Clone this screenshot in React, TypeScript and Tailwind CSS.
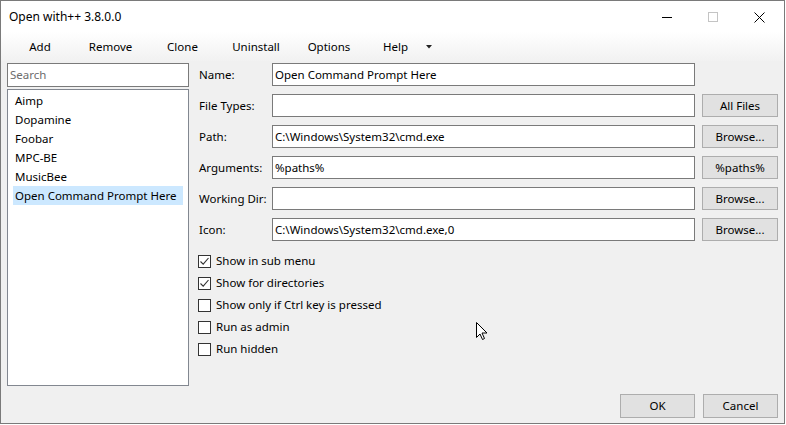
import React from 'react';

const font = { fontFamily: '"Noto Sans", "Segoe UI", sans-serif' };

const items = ['Aimp', 'Dopamine', 'Foobar', 'MPC-BE', 'MusicBee', 'Open Command Prompt Here'];

const fields = [
  { label: 'Name:', value: 'Open Command Prompt Here' },
  { label: 'File Types:', value: '', button: 'All Files' },
  { label: 'Path:', value: 'C:\\Windows\\System32\\cmd.exe', button: 'Browse...' },
  { label: 'Arguments:', value: '%paths%', button: '%paths%' },
  { label: 'Working Dir:', value: '', button: 'Browse...' },
  { label: 'Icon:', value: 'C:\\Windows\\System32\\cmd.exe,0', button: 'Browse...' },
];

const checks = [
  { label: 'Show in sub menu', checked: true },
  { label: 'Show for directories', checked: true },
  { label: 'Show only if Ctrl key is pressed', checked: false },
  { label: 'Run as admin', checked: false },
  { label: 'Run hidden', checked: false },
];

const toolbar = [
  { label: 'Add', w: 'w-[64px]' },
  { label: 'Remove', w: 'w-[77px]' },
  { label: 'Clone', w: 'w-[67px]' },
  { label: 'Uninstall', w: 'w-[80px]' },
  { label: 'Options', w: 'w-[66px]' },
];

const WinButton: React.FC<{ children: React.ReactNode; className?: string }> = ({ children, className }) => (
  <div
    className={`flex items-center justify-center bg-[#e1e1e1] border border-[#adadad] text-[11.5px] text-black ${className ?? ''}`}
  >
    {children}
  </div>
);

export default function App() {
  return (
    <div className="w-[786px] h-[425px] bg-white" style={font}>
      <div className="relative w-[785px] h-[424px] border border-[#7a7a7a] bg-[#f0f0f0] flex flex-col overflow-hidden">
        {/* title bar */}
        <div className="h-[31px] bg-white flex items-center pl-[8px] pt-[1px] text-[12px] text-black shrink-0">
          <span>Open with++ 3.8.0.0</span>
          <div className="ml-auto flex items-center h-full">
            <div className="w-[46px] h-full flex items-center justify-center">
              <div className="w-[10px] h-px bg-black" />
            </div>
            <div className="w-[46px] h-full flex items-center justify-center">
              <div className="w-[10px] h-[10px] border border-[#c4c4c4]" />
            </div>
            <div className="w-[46px] h-full flex items-center justify-center">
              <svg width="11" height="11" viewBox="0 0 11 11">
                <path d="M0.5 0.5 L10.5 10.5 M10.5 0.5 L0.5 10.5" stroke="#000" strokeWidth="1" />
              </svg>
            </div>
            <div className="w-[2px]" />
          </div>
        </div>

        {/* toolbar */}
        <div className="h-[29px] shrink-0 flex items-center pl-[7px] text-[11.5px] text-black bg-gradient-to-b from-white to-[#f1f1f1]">
          {toolbar.map((t) => (
            <div key={t.label} className={`${t.w} text-center`}>
              {t.label}
            </div>
          ))}
          <div className="flex items-center pl-[21px]">
            <span>Help</span>
            <svg className="ml-[18px]" width="6" height="4" viewBox="0 0 6 4">
              <path d="M0 0 H6 L3 3.5 Z" fill="#222" />
            </svg>
          </div>
        </div>

        {/* body */}
        <div className="flex pt-[2px] pl-[6px] text-[11.5px] text-black">
          <div className="w-[182px] flex flex-col shrink-0">
            <div className="h-[24px] bg-white border border-[#7a7a7a] flex items-center pl-[2px] text-[#6d6d6d]">
              Search
            </div>
            <div className="mt-[2px] h-[297px] bg-white border border-[#828790] pt-[1px] px-[5px]">
              {items.map((it, i) => (
                <div
                  key={it}
                  className={`h-[19px] flex items-center pl-[2px] whitespace-nowrap ${
                    i === items.length - 1 ? 'bg-[#cce8ff]' : ''
                  }`}
                >
                  {it}
                </div>
              ))}
            </div>
          </div>

          <div className="ml-[9px] flex flex-col">
            <div className="flex flex-col gap-[8px]">
              {fields.map((f) => (
                <div key={f.label} className="flex items-center h-[23px]">
                  <div className="w-[74px] pl-[1px]">{f.label}</div>
                  <div className="w-[423px] h-[23px] bg-white border border-[#7a7a7a] flex items-center pl-[2px] whitespace-nowrap">
                    {f.value}
                  </div>
                  {f.button && <WinButton className="ml-[7px] w-[76px] h-[23px]">{f.button}</WinButton>}
                </div>
              ))}
            </div>

            <div className="mt-[9px] flex flex-col">
              {checks.map((c) => (
                <div key={c.label} className="h-[22px] flex items-center">
                  <div className="w-[13px] h-[13px] border border-[#333333] bg-white flex items-center justify-center">
                    {c.checked && (
                      <svg width="11" height="11" viewBox="0 0 11 11">
                        <path d="M1.5 5.5 L4.2 8.2 L9.5 2" fill="none" stroke="#333" strokeWidth="1.1" />
                      </svg>
                    )}
                  </div>
                  <span className="ml-[5px]">{c.label}</span>
                </div>
              ))}
            </div>
          </div>
        </div>

        {/* bottom buttons */}
        <div className="mt-auto mb-[5px] flex justify-end pr-[6px] gap-[8px]">
          <WinButton className="w-[75px] h-[24px]">OK</WinButton>
          <WinButton className="w-[75px] h-[24px]">Cancel</WinButton>
        </div>

        {/* mouse cursor */}
        <svg className="absolute left-[475px] top-[321px]" width="12" height="19" viewBox="0 0 12 19">
          <path
            d="M0.5 0.5 L0.5 15.5 L4 12 L6.5 17.5 L8.5 16.5 L6 11 L11 11 Z"
            fill="#fff"
            stroke="#000"
            strokeWidth="1"
            strokeLinejoin="miter"
          />
        </svg>
      </div>
    </div>
  );
}
